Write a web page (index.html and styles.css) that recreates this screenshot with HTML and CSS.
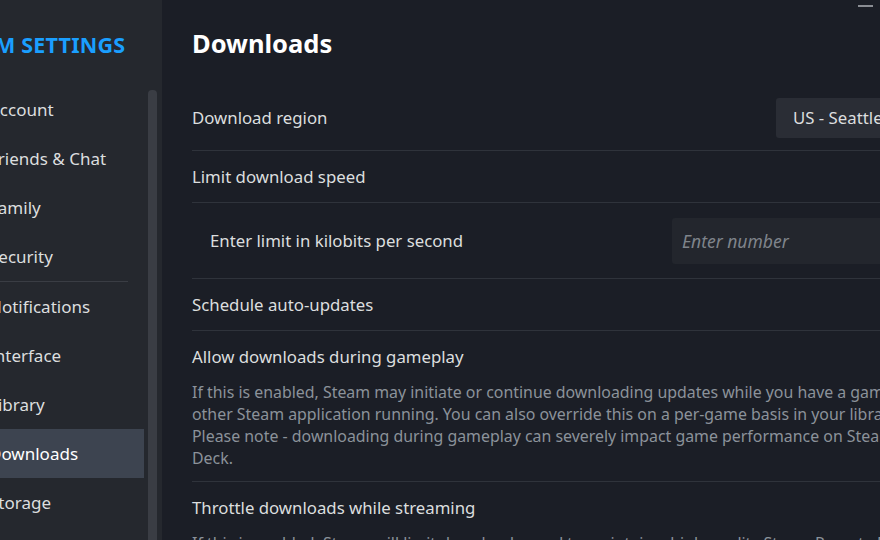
FILE: index.html
```html
<!DOCTYPE html>
<html>
<head>
<meta charset="utf-8">
<link rel="stylesheet" href="styles.css">
</head>
<body>
<div class="app">
  <aside class="sidebar">
    <nav class="nav">
      <div class="brand">STEAM SETTINGS</div>
      <ul class="menu">
        <li class="item">Account</li>
        <li class="item">Friends &amp; Chat</li>
        <li class="item">Family</li>
        <li class="item item-sep">Security</li>
        <li class="item">Notifications</li>
        <li class="item">Interface</li>
        <li class="item">Library</li>
        <li class="item active">Downloads</li>
        <li class="item">Storage</li>
      </ul>
    </nav>
    <div class="scrollbar"></div>
  </aside>
  <main class="content">
    <div class="winbar"><span class="minimize"></span></div>
    <h1 class="title">Downloads</h1>
    <section class="row row-first">
      <div class="label">Download region</div>
      <div class="select">US - Seattle</div>
    </section>
    <section class="row row-plain">
      <div class="label">Limit download speed</div>
    </section>
    <section class="row row-sub">
      <div class="label">Enter limit in kilobits per second</div>
      <div class="input">Enter number</div>
    </section>
    <section class="row row-plain">
      <div class="label">Schedule auto-updates</div>
    </section>
    <section class="row row-desc">
      <div class="label">Allow downloads during gameplay</div>
      <p class="desc">If this is enabled, Steam may initiate or continue downloading updates while you have a game or<br>other Steam application running. You can also override this on a per-game basis in your library<br>Please note - downloading during gameplay can severely impact game performance on Steam<br>Deck.</p>
    </section>
    <section class="row row-desc last">
      <div class="label">Throttle downloads while streaming</div>
      <p class="desc">If this is enabled, Steam will limit download speed to maintain a high-quality Steam Remote Play</p>
    </section>
  </main>
</div>
</body>
</html>
```
FILE: styles.css
```css
html, body {
  margin: 0;
  padding: 0;
  width: 880px;
  height: 540px;
  overflow: hidden;
  background: #1b1e26;
  font-family: "Noto Sans", "Open Sans", sans-serif;
}

.app {
  display: flex;
  width: 880px;
  height: 540px;
  overflow: hidden;
}

.sidebar {
  flex: 0 0 162px;
  display: flex;
  background: #25282e;
  overflow: hidden;
}

.nav {
  flex: 0 0 144px;
  overflow: hidden;
}

.brand {
  margin: 30px 0 0 -57px;
  white-space: nowrap;
  font-size: 21.5px;
  font-weight: 700;
  color: #1a9fff;
  letter-spacing: 0.2px;
  line-height: 30px;
}

.menu {
  list-style: none;
  margin: 25px 0 0;
  padding: 0;
}

.item {
  height: 49px;
  line-height: 49px;
  text-indent: -11px;
  white-space: nowrap;
  font-size: 17px;
  color: #dcdedf;
}

.item-sep {
  border-bottom: 1px solid #3a3d44;
  margin-right: 16px;
}

.active {
  background: #3d4450;
  color: #ffffff;
}

.scrollbar {
  flex: 0 0 9px;
  margin: 90px 0 0 4px;
  background: #3a3d44;
  border-radius: 4px 4px 0 0;
}

.content {
  flex: 1 1 auto;
  min-width: 0;
  padding: 0 0 0 30px;
  position: relative;
  overflow: hidden;
}

.winbar {
  position: absolute;
  top: 5px;
  right: 7px;
}

.minimize {
  display: block;
  width: 15px;
  height: 2px;
  background: #8a8d93;
}

.title {
  margin: 26px 0 0;
  font-size: 25.5px;
  font-weight: 700;
  color: #ffffff;
  line-height: 34px;
}

.row {
  display: flex;
  align-items: center;
  justify-content: space-between;
  width: 760px;
  border-bottom: 1px solid #2f333b;
  box-sizing: border-box;
}

.row-first {
  margin-top: 25px;
  height: 66px;
}

.label {
  font-size: 16.8px;
  color: #dcdedf;
  white-space: nowrap;
}

.select {
  width: 176px;
  height: 40px;
  line-height: 40px;
  padding-left: 17px;
  box-sizing: border-box;
  background: #2a2d35;
  border-radius: 3px;
  font-size: 16.8px;
  color: #dcdedf;
  white-space: nowrap;
}

.row-plain {
  height: 52px;
}

.row-sub {
  height: 76px;
  padding-left: 18px;
}

.input {
  width: 280px;
  height: 46px;
  line-height: 46px;
  padding-left: 10px;
  box-sizing: border-box;
  background: #23262d;
  border-radius: 3px;
  font-size: 17.5px;
  font-style: italic;
  color: #7f848b;
  white-space: nowrap;
}

.row-desc {
  display: block;
  padding-top: 14px;
  padding-bottom: 12px;
}

.row-desc .label {
  line-height: 24px;
}

.desc {
  margin: 12px 0 0;
  font-size: 15.9px;
  line-height: 22px;
  color: #8b929a;
  white-space: nowrap;
}

.last {
  border-bottom: 0;
}
```
